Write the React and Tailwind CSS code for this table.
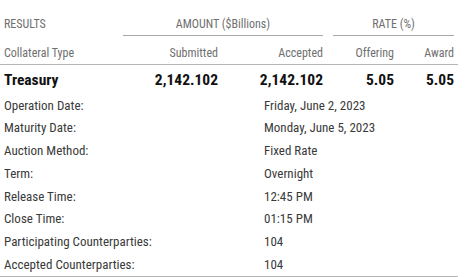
import React from 'react';

const details = [
  ['Operation Date:', 'Friday, June 2, 2023'],
  ['Maturity Date:', 'Monday, June 5, 2023'],
  ['Auction Method:', 'Fixed Rate'],
  ['Term:', 'Overnight'],
  ['Release Time:', '12:45 PM'],
  ['Close Time:', '01:15 PM'],
  ['Participating Counterparties:', '104'],
  ['Accepted Counterparties:', '104'],
];

function App() {
  return (
    <div className="w-[465px] h-[277px] bg-white overflow-hidden font-stretch-condensed" style={{ fontFamily: 'Roboto, "Liberation Sans", sans-serif' }}>
      <div className="w-[458px]">
        {/* group headers */}
        <div className="grid grid-cols-[123px_200px_131px] pr-1 text-[12px] leading-4 text-[#6f6f6f] pt-4">
          <div className="pl-1">RESULTS</div>
          <div className="text-center pb-[3px] border-b border-[#a8a8a8]">AMOUNT ($Billions)</div>
          <div className="text-center pb-[3px] border-b border-[#a8a8a8] ml-[10px]">RATE (%)</div>
        </div>

        {/* column headers */}
        <div className="grid grid-cols-[123px_95px_105px_71px_60px] pr-1 text-[12px] leading-4 text-[#6f6f6f] pt-[9px] pb-[3px] border-b border-[#b5b5b5]">
          <div className="pl-1">Collateral Type</div>
          <div className="text-right">Submitted</div>
          <div className="text-right">Accepted</div>
          <div className="text-right">Offering</div>
          <div className="text-right">Award</div>
        </div>

        {/* main row */}
        <div className="grid grid-cols-[123px_95px_105px_71px_60px] pr-1 text-[15.5px] leading-5 font-bold text-[#111] pt-[5px]">
          <div className="pl-1">Treasury</div>
          <div className="text-right">2,142.102</div>
          <div className="text-right">2,142.102</div>
          <div className="text-right">5.05</div>
          <div className="text-right">5.05</div>
        </div>

        {/* details */}
        <div className="pt-1 border-b border-[#b5b5b5]">
          {details.map(([label, value]) => (
            <div key={label} className="grid grid-cols-[264px_1fr] h-[22.75px] items-center text-[13px] text-[#3a3a3a]">
              <div className="pl-1">{label}</div>
              <div>{value}</div>
            </div>
          ))}
        </div>
      </div>
    </div>
  );
}

export default App;
